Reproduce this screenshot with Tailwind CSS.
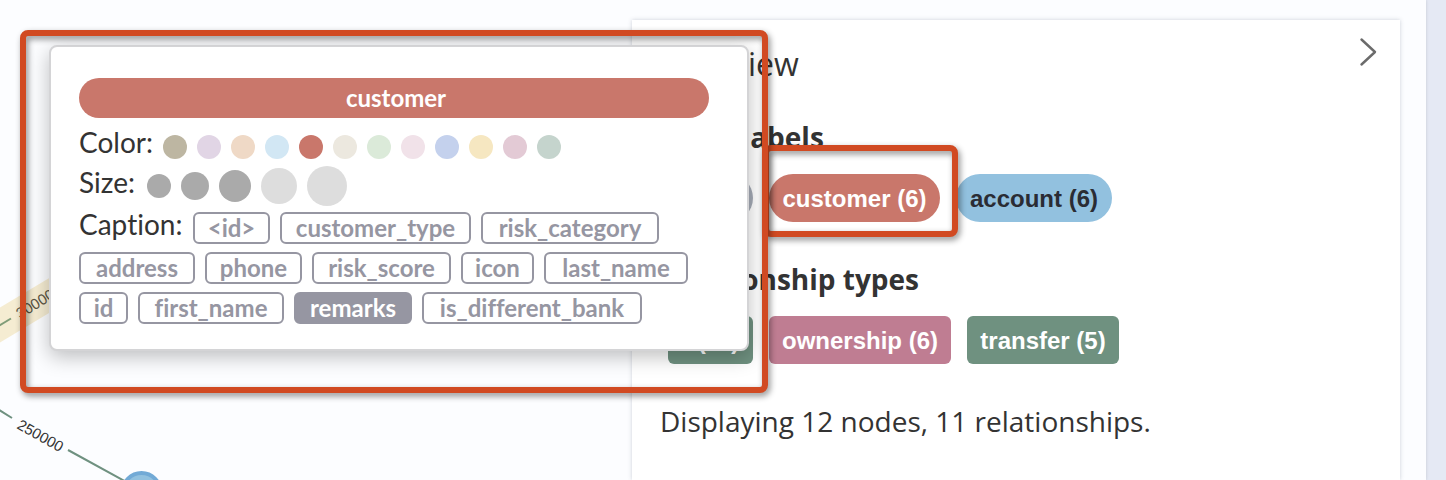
<!DOCTYPE html>
<html lang="en">
<head>
<meta charset="utf-8">
<title>Graph overview</title>
<script src="https://cdn.jsdelivr.net/npm/@tailwindcss/browser@4"></script>
</head>
<body class="flex min-h-screen bg-[#e5e9f4] font-['Open_Sans',sans-serif] text-[#333333]">
<main class="relative flex flex-1 overflow-hidden bg-[#fcfdff] pt-5 pr-[26px] shadow-[0_0_3px_rgba(0,0,0,0.15)]">

  <!-- Graph canvas -->
  <svg class="absolute top-0 left-0" width="240" height="480" viewBox="0 0 240 480" fill="none" font-family="'Liberation Sans', sans-serif" font-size="15" aria-label="Graph">
    <path d="M-10 331 L90 271" stroke="#f5ecd2" stroke-width="30"/>
    <path d="M-4 327.500 L11 318.500" stroke="#7f9c78" stroke-width="2"/>
    <text transform="translate(20 319) rotate(-31)" fill="#5c5644">300000</text>
    <path d="M-4 408 L12 418 M68 450 L130 484" stroke="#6f9180" stroke-width="2"/>
    <text transform="translate(16 428) rotate(29)" fill="#333333">250000</text>
    <circle cx="141.500" cy="492" r="19" fill="#92c1df" stroke="#72aad6" stroke-width="4"/>
  </svg>

  <!-- Overview panel -->
  <section class="ml-auto w-[768px] bg-white px-7 pt-6 shadow-[0_0_4px_rgba(60,70,100,0.25)]">
    <div class="flex items-start justify-between">
      <h2 class="text-[32px] leading-10">Overview</h2>
      <button type="button" aria-label="Collapse panel" class="-mt-2 -mr-3 flex size-8 items-center justify-center">
        <svg width="20" height="32" viewBox="0 0 20 32" fill="none" stroke="#6b6b6b" stroke-width="2.400" stroke-linecap="round" stroke-linejoin="round"><path d="M3.500 3.500 L17 16 L3.500 28.500"/></svg>
      </button>
    </div>
    <h3 class="mt-[33px] text-[28px] leading-10 font-bold">Node labels</h3>
    <div class="mt-[17px] flex gap-4 pl-2 font-['Liberation_Sans',sans-serif] text-2xl font-bold text-white">
      <button type="button" class="h-12 w-[85px] rounded-full bg-[#a5abb6] pt-0.5">* (12)</button>
      <button type="button" class="h-12 w-[171px] rounded-full bg-[#c9776b] pt-0.5">customer (6)</button>
      <button type="button" class="h-12 w-[156px] rounded-full bg-[#92c1df] pt-0.5 text-[#2a2c34]">account (6)</button>
    </div>
    <h3 class="mt-[37px] text-[28px] leading-10 font-bold">Relationship types</h3>
    <div class="mt-[17px] flex gap-4 pl-2 font-['Liberation_Sans',sans-serif] text-2xl font-bold text-white">
      <button type="button" class="h-12 w-[85px] rounded-md bg-[#6f9180] pt-0.5">* (11)</button>
      <button type="button" class="h-12 w-[182px] rounded-md bg-[#bf7d92] pt-0.5">ownership (6)</button>
      <button type="button" class="h-12 w-[152px] rounded-md bg-[#6f9180] pt-0.5">transfer (5)</button>
    </div>
    <p class="mt-[37px] text-[28px] leading-10">Displaying 12 nodes, 11 relationships.</p>
  </section>

  <!-- Style editor popup -->
  <div role="dialog" aria-label="Label style" class="absolute top-[45px] left-[49px] w-[700px] rounded-lg border-2 border-[#d4d4d6] bg-white px-7 pt-[31px] pb-[25px] font-['Lato',sans-serif] [font-variant-ligatures:none] shadow-[0_6px_20px_rgba(0,0,0,0.25)]">
    <div class="mr-2.5 flex h-10 items-center justify-center rounded-full bg-[#c9776b] pl-1 text-2xl font-bold text-white">customer</div>
    <div class="mt-[9px] flex h-10 items-center gap-2.5">
      <span class="w-[74px] pb-2.5 text-[28px] leading-8">Color:</span>
      <button type="button" aria-label="Olive" class="size-6 rounded-full bg-[#bdb6a2]"></button>
      <button type="button" aria-label="Lilac" class="size-6 rounded-full bg-[#e1d5e5]"></button>
      <button type="button" aria-label="Peach" class="size-6 rounded-full bg-[#efd9c6]"></button>
      <button type="button" aria-label="Sky" class="size-6 rounded-full bg-[#d2e7f4]"></button>
      <button type="button" aria-label="Red" aria-pressed="true" class="size-6 rounded-full bg-[#c9776b]"></button>
      <button type="button" aria-label="Sand" class="size-6 rounded-full bg-[#ece8df]"></button>
      <button type="button" aria-label="Mint" class="size-6 rounded-full bg-[#dbead9]"></button>
      <button type="button" aria-label="Pink" class="size-6 rounded-full bg-[#f1e2e9]"></button>
      <button type="button" aria-label="Blue" class="size-6 rounded-full bg-[#c4d1ed]"></button>
      <button type="button" aria-label="Yellow" class="size-6 rounded-full bg-[#f6e7c1]"></button>
      <button type="button" aria-label="Rose" class="size-6 rounded-full bg-[#e3cad5]"></button>
      <button type="button" aria-label="Sage" class="size-6 rounded-full bg-[#c5d4cd]"></button>
    </div>
    <div class="flex h-[38px] items-center gap-2.5">
      <span class="w-[58px] pb-2 text-[28px] leading-8">Size:</span>
      <button type="button" aria-label="Size 1" class="size-6 rounded-full bg-[#aaaaaa]"></button>
      <button type="button" aria-label="Size 2" class="size-7 rounded-full bg-[#aaaaaa]"></button>
      <button type="button" aria-label="Size 3" class="size-8 rounded-full bg-[#aaaaaa]"></button>
      <button type="button" aria-label="Size 4" class="size-9 rounded-full bg-[#dddddd]"></button>
      <button type="button" aria-label="Size 5" class="size-10 rounded-full bg-[#dddddd]"></button>
    </div>
    <div class="mt-[7px] flex flex-wrap gap-x-2.5 gap-y-2 text-2xl leading-7 font-bold text-[#9696a2]">
      <span class="h-8 w-[104px] text-[28px] leading-6 font-normal text-[#333333]">Caption:</span>
      <button type="button" class="h-8 w-[77px] rounded-md border-2 border-[#9696a2]">&lt;id&gt;</button>
      <button type="button" class="h-8 w-[191px] rounded-md border-2 border-[#9696a2]">customer_type</button>
      <button type="button" class="h-8 w-[178px] rounded-md border-2 border-[#9696a2]">risk_category</button>
      <button type="button" class="h-8 w-[116px] rounded-md border-2 border-[#9696a2]">address</button>
      <button type="button" class="h-8 w-[97px] rounded-md border-2 border-[#9696a2]">phone</button>
      <button type="button" class="h-8 w-[139px] rounded-md border-2 border-[#9696a2]">risk_score</button>
      <button type="button" class="h-8 w-[73px] rounded-md border-2 border-[#9696a2]">icon</button>
      <button type="button" class="h-8 w-[144px] rounded-md border-2 border-[#9696a2]">last_name</button>
      <button type="button" class="h-8 w-[49px] rounded-md border-2 border-[#9696a2]">id</button>
      <button type="button" class="h-8 w-[146px] rounded-md border-2 border-[#9696a2]">first_name</button>
      <button type="button" aria-pressed="true" class="h-8 w-[118px] rounded-md border-2 border-[#9696a2] bg-[#9696a2] text-white">remarks</button>
      <button type="button" class="h-8 w-[220px] rounded-md border-2 border-[#9696a2]">is_different_bank</button>
    </div>
  </div>

  <!-- Highlight frames -->
  <div class="pointer-events-none absolute top-[145px] left-[763px] h-[92px] w-[195px] rounded-lg border-6 border-[#d14a22] drop-shadow-[2px_3px_3px_rgba(0,0,0,0.45)]"></div>
  <div class="pointer-events-none absolute top-[30px] left-5 h-[363px] w-[748px] rounded-lg border-6 border-[#d14a22] drop-shadow-[2px_3px_3px_rgba(0,0,0,0.45)]"></div>
</main>
<div class="w-5"></div>
</body>
</html>
